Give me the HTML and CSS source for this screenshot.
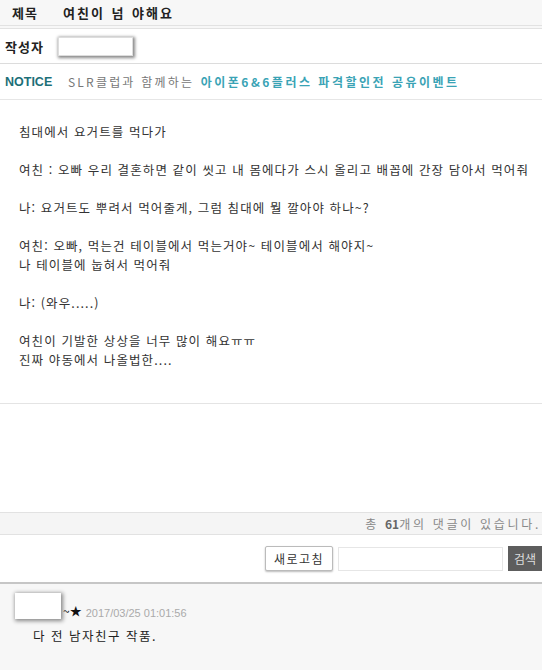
FILE: index.html
```html
<!DOCTYPE html>
<html lang="ko">
  <head>
    <meta charset="UTF-8" />
    <meta name="viewport" content="width=device-width, initial-scale=1.0" />
    <title>여친이 넘 야해요</title>
    <link rel="stylesheet" href="styles.css">
  </head>
  <body>
    <div class="board">
      <div class="title-row">
        <span class="label">제목</span>
        <span class="subject">여친이 넘 야해요</span>
      </div>

      <div class="author-row">
        <span class="label">작성자</span>
        <span class="name-box"></span>
      </div>

      <div class="notice-row">
        <span class="notice">NOTICE</span>
        <span class="notice-text">SLR클럽과 함께하는 <a href="#" class="notice-link">아이폰6&amp;6플러스 파격할인전 공유이벤트</a></span>
      </div>

      <div class="post-body">
        <p>침대에서 요거트를 먹다가</p>
        <p>여친 : 오빠 우리 결혼하면 같이 씻고 내 몸에다가 스시 올리고 배꼽에 간장 담아서 먹어줘</p>
        <p>나: 요거트도 뿌려서 먹어줄게, 그럼 침대에 뭘 깔아야 하나~?</p>
        <p>여친: 오빠, 먹는건 테이블에서 먹는거야~ 테이블에서 해야지~<br>나 테이블에 눕혀서 먹어줘</p>
        <p>나: (와우.....)</p>
        <p>여친이 기발한 상상을 너무 많이 해요ㅠㅠ<br>진짜 야동에서 나올법한....</p>
      </div>

      <div class="spacer"></div>

      <div class="comment-count">총 <b>61</b>개의 댓글이 있습니다.</div>

      <div class="comment-tools">
        <button class="refresh-btn">새로고침</button>
        <input class="search-input" type="text">
        <button class="search-btn">검색</button>
      </div>

      <div class="comment">
        <div class="comment-head">
          <span class="avatar-box"></span>
          <span class="nick">~★</span>
          <span class="date">2017/03/25 01:01:56</span>
        </div>
        <p class="comment-text">다 전 남자친구 작품.</p>
      </div>
    </div>
  </body>
</html>
```

FILE: styles.css
```css
body {
  margin: 0;
  background: #fff;
  font-family: "Noto Sans CJK KR", "DejaVu Sans", sans-serif;
  color: #333;
}


.board {
  width: 542px;
}


.title-row {
  height: 25px;
  display: flex;
  align-items: center;
  background-color: #f7f7f7;
  border-bottom: 4px double #e2e2e2;
  font-size: 13px;
  font-weight: bold;
  color: #222;
}


.title-row .label {
  width: 51px;
  padding-left: 12px;
  letter-spacing: 1px;
}


.subject {
  letter-spacing: 2px;
  word-spacing: 1px;
}


.author-row {
  height: 34px;
  display: flex;
  align-items: center;
  border-bottom: 1px solid #dcdcdc;
  font-size: 13px;
  font-weight: bold;
  color: #222;
}


.author-row .label {
  width: 53px;
  padding-left: 5px;
  letter-spacing: 1px;
}


.name-box {
  width: 73px;
  height: 17px;
  background: #fff;
  border: 1px solid #ddd;
  box-shadow: 1px 1px 3px 1px #888;
}


.notice-row {
  height: 35px;
  display: flex;
  align-items: center;
  padding-left: 5px;
  border-bottom: 1px solid #e6e6e6;
  font-size: 12px;
}


.notice {
  width: 63px;
  font-family: "Liberation Sans", Arial, sans-serif;
  font-size: 12.5px;
  font-weight: bold;
  color: #1d6f78;
}


.notice-text {
  color: #777;
  letter-spacing: 2.2px;
}


.notice-link {
  color: #3aa3b5;
  font-weight: bold;
  text-decoration: none;
  margin-left: 1px;
  letter-spacing: 2.5px;
}


.post-body {
  padding: 22px 4px 34px 19px;
  border-bottom: 1px solid #e4e4e4;
  font-size: 12.5px;
  line-height: 19px;
  letter-spacing: 1.1px;
  color: #333;
}


.post-body p {
  margin: 0 0 19px;
  white-space: nowrap;
}


.post-body p:last-child {
  margin-bottom: 0;
}


.spacer {
  height: 108px;
}


.comment-count {
  height: 21px;
  line-height: 21px;
  text-align: right;
  padding-right: 1px;
  background-color: #f5f5f5;
  border-top: 1px solid #e2e2e2;
  border-bottom: 1px solid #e2e2e2;
  font-size: 12px;
  letter-spacing: 2.7px;
  color: #888;
}


.comment-count b {
  color: #666;
  letter-spacing: 0;
}


.comment-tools {
  height: 47px;
  display: flex;
  align-items: center;
  justify-content: flex-end;
  gap: 5px;
  border-bottom: 2px solid #c6c6c6;
}


.refresh-btn {
  width: 68px;
  height: 25px;
  padding: 0;
  background: #fff;
  border: 1px solid #bbb;
  border-radius: 2px;
  box-shadow: 0 1px 2px #bbb;
  font-family: "Noto Sans CJK KR", sans-serif;
  font-size: 12px;
  letter-spacing: 1.5px;
  color: #333;
}


.search-input {
  width: 163px;
  height: 22px;
  padding: 0;
  border: 1px solid #e6e6e6;
}


.search-btn {
  width: 34px;
  height: 25px;
  padding: 0;
  background: #5d5d5d;
  border: none;
  font-family: "Noto Sans CJK KR", sans-serif;
  font-size: 12px;
  color: #ddd;
}


.comment {
  height: 87px;
  background-color: #f7f7f7;
  padding: 9px 0 0 15px;
}


.comment-head {
  display: flex;
  align-items: flex-end;
}


.avatar-box {
  width: 46px;
  height: 26px;
  background: #fff;
  box-shadow: 1px 1px 4px 1px #888;
}


.nick {
  margin-left: 2px;
  font-size: 12px;
  color: #111;
}


.date {
  margin-left: 4px;
  font-family: "Liberation Sans", Arial, sans-serif;
  font-size: 11px;
  color: #aaa;
}


.comment-text {
  margin: 7px 0 0 18px;
  font-size: 12.5px;
  letter-spacing: 1.5px;
  color: #222;
}
```
